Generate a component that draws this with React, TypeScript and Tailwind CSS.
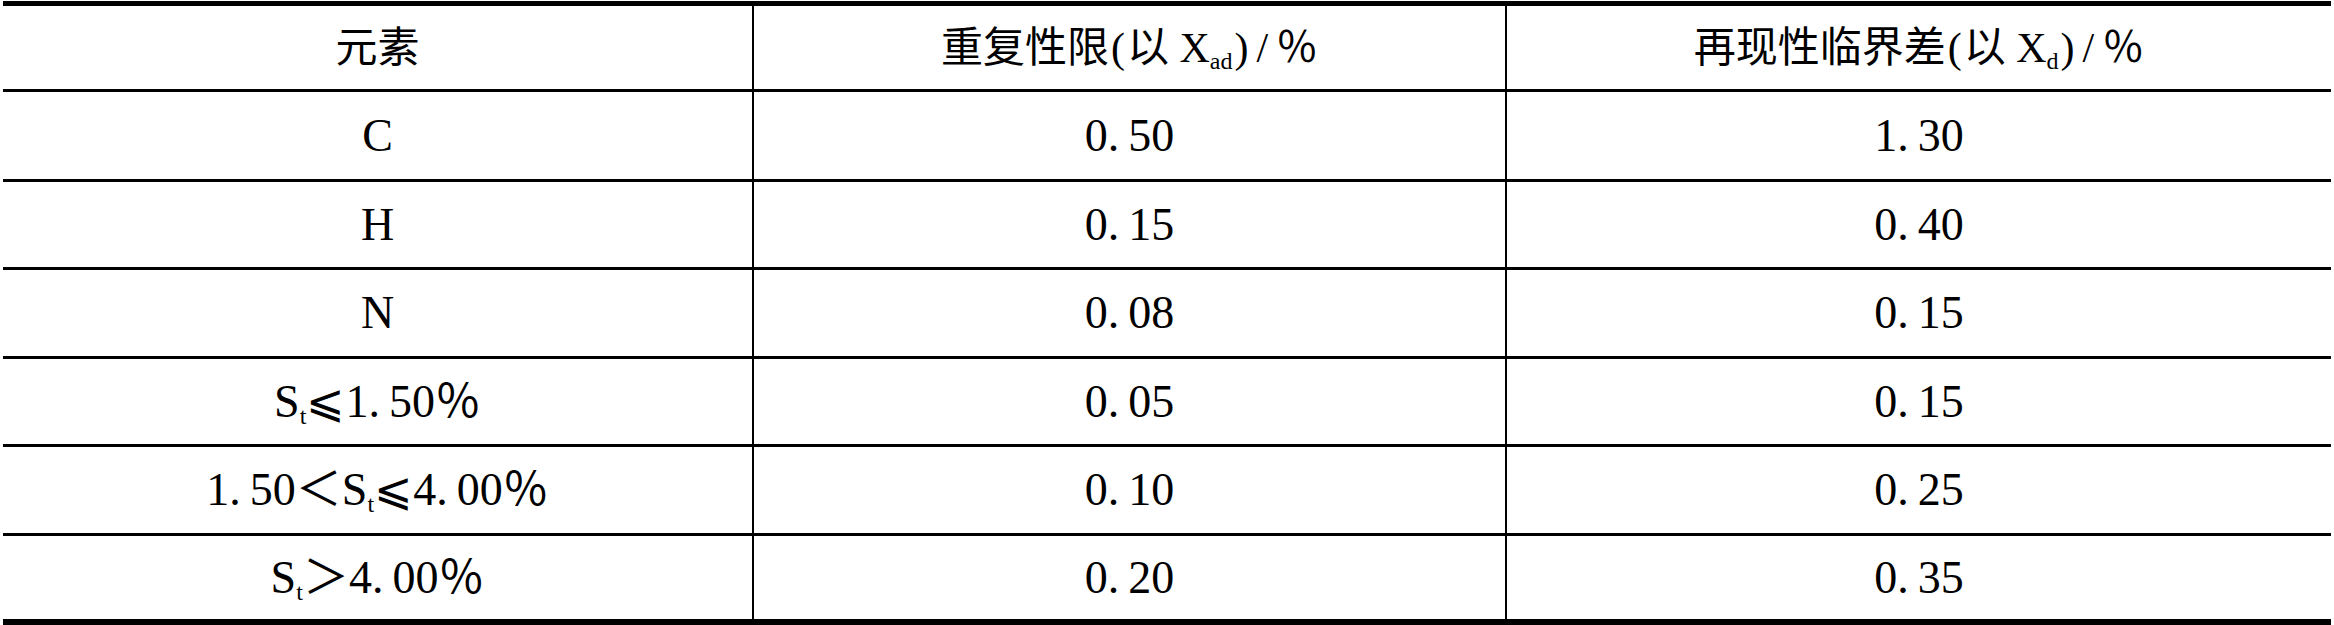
import React from "react";

const FONT = '"Liberation Serif", "Noto Sans CJK SC", "DejaVu Serif", serif';

function Num({ v }: { v: string }) {
  const [i, d] = v.split(".");
  return (
    <span>
      {i}
      <span className="pr-[9px]">.</span>
      {d}
    </span>
  );
}

function Sub({ children }: { children: React.ReactNode }) {
  return <sub className="text-[24px] relative bottom-[-0.3em] align-baseline leading-none">{children}</sub>;
}

type Row = { a: React.ReactNode; b: string; c: string; h: string; line: string };

const rows: Row[] = [
  { a: "C", b: "0.50", c: "1.30", h: "h-[87px]", line: "border-b-[3px]" },
  { a: "H", b: "0.15", c: "0.40", h: "h-[85px]", line: "border-b-[3px]" },
  { a: "N", b: "0.08", c: "0.15", h: "h-[86px]", line: "border-b-[3px]" },
  {
    a: (
      <span>
        S<Sub>t</Sub>⩽1<span className="pr-[9px]">.</span>50％
      </span>
    ),
    b: "0.05",
    c: "0.15",
    h: "h-[85px]",
    line: "border-b-[3px]",
  },
  {
    a: (
      <span>
        1<span className="pr-[9px]">.</span>50＜S<Sub>t</Sub>⩽4<span className="pr-[9px]">.</span>00％
      </span>
    ),
    b: "0.10",
    c: "0.25",
    h: "h-[86px]",
    line: "border-b-[3px]",
  },
  {
    a: (
      <span>
        S<Sub>t</Sub>＞4<span className="pr-[9px]">.</span>00％
      </span>
    ),
    b: "0.20",
    c: "0.35",
    h: "h-[83px]",
    line: "",
  },
];

export default function App() {
  return (
    <div className="w-[2334px] h-[625px] bg-white pt-[1px] text-black" style={{ fontFamily: FONT }}>
      <div className="ml-[3px] w-[2328px] border-t-[5px] border-b-[6px] border-black">
        {/* header */}
        <div className="flex h-[86px] border-b-[3px] border-black text-[42px] leading-none">
          <div className="w-[751px] border-r-2 border-black flex items-center justify-center">元素</div>
          <div className="w-[753px] border-r-2 border-black flex items-center justify-center">
            <span>
              重复性限<span className="mx-[2px]">(</span>以 X<Sub>ad</Sub>
              <span className="ml-[2px]">)</span>
              <span className="mx-[8px]">/</span>％
            </span>
          </div>
          <div className="flex-1 flex items-center justify-center">
            <span>
              再现性临界差<span className="mx-[2px]">(</span>以 X<Sub>d</Sub>
              <span className="ml-[2px]">)</span>
              <span className="mx-[8px]">/</span>％
            </span>
          </div>
        </div>
        {rows.map((r, idx) => (
          <div
            key={idx}
            className={`flex ${r.h} ${r.line} border-black text-[46px] leading-none box-content`}
          >
            <div className="w-[751px] border-r-2 border-black flex items-center justify-center">{r.a}</div>
            <div className="w-[753px] border-r-2 border-black flex items-center justify-center">
              <Num v={r.b} />
            </div>
            <div className="flex-1 flex items-center justify-center">
              <Num v={r.c} />
            </div>
          </div>
        ))}
      </div>
    </div>
  );
}
